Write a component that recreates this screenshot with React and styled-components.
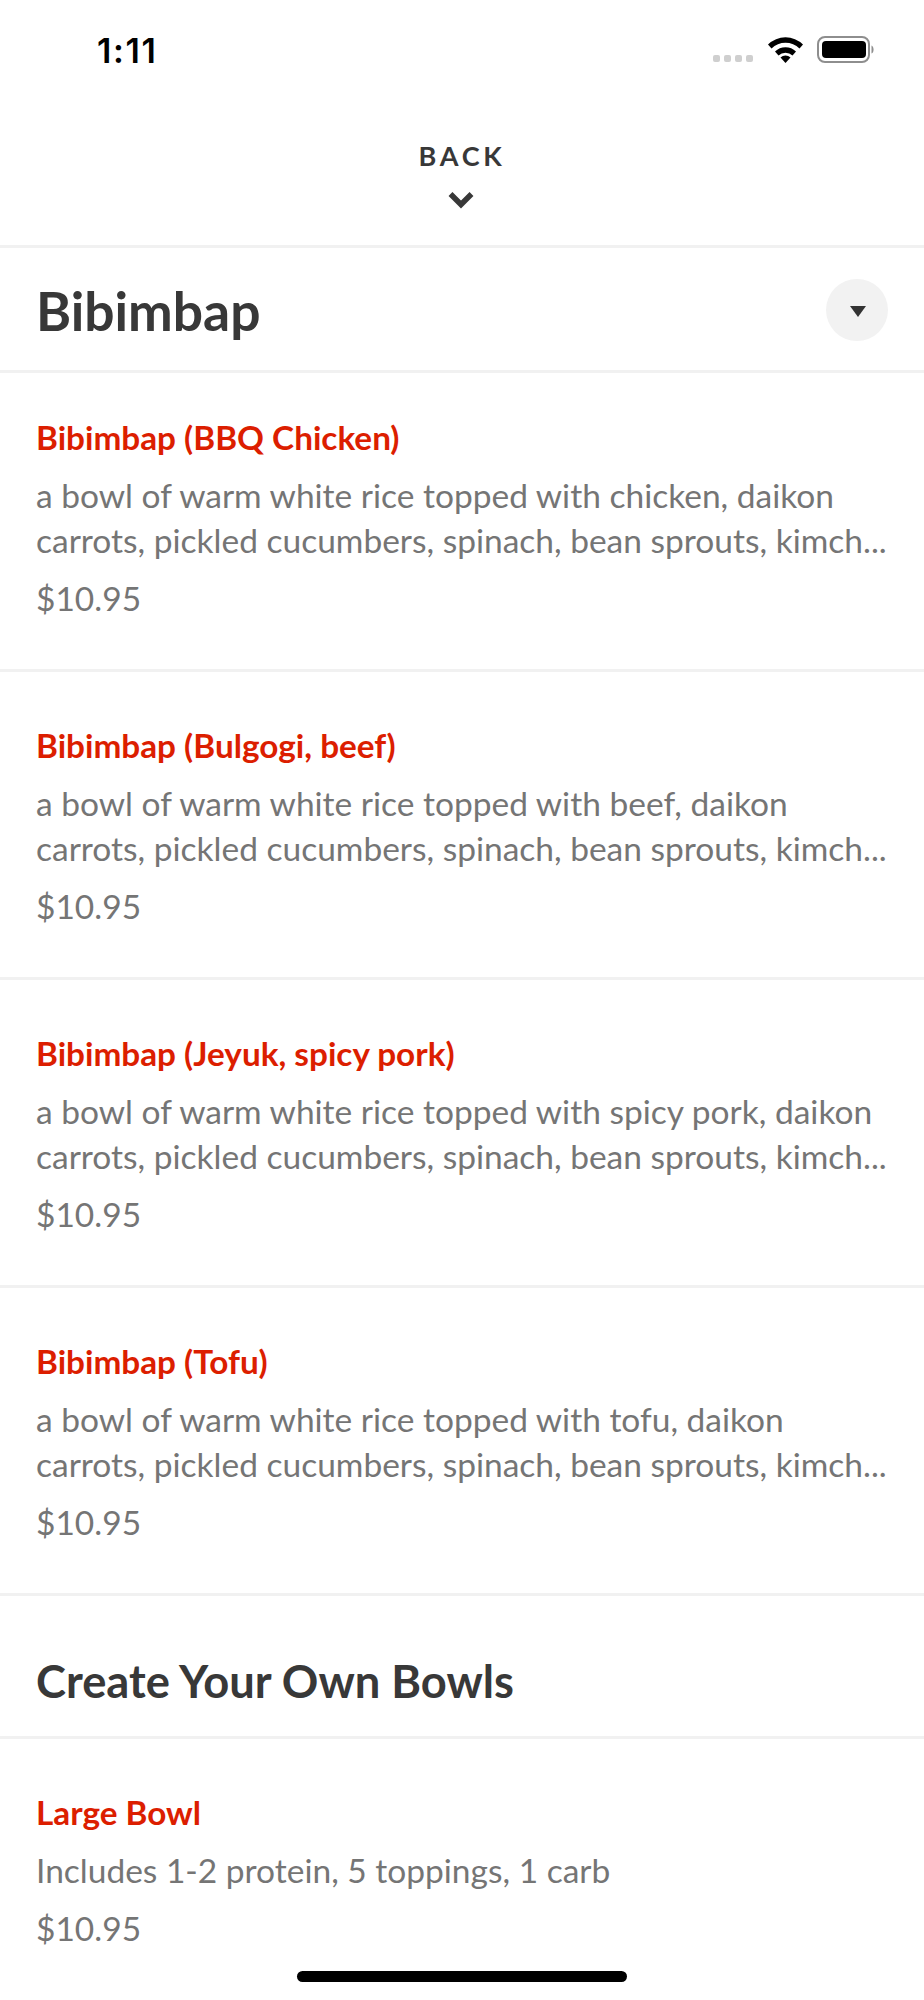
import React from 'react';
import styled, { createGlobalStyle } from 'styled-components';

const GlobalStyle = createGlobalStyle`
  * {
    margin: 0;
    padding: 0;
    box-sizing: border-box;
  }
  body {
    background: #fff;
    font-family: 'Lato', sans-serif;
  }
`;

const Screen = styled.div`
  position: relative;
  width: 924px;
  height: 2000px;
  overflow: hidden;
  background: #fff;
`;

const StatusBar = styled.div`
  display: flex;
  align-items: flex-start;
  justify-content: space-between;
  height: 141px;
  padding: 31px 49px 0 97px;
`;

const Time = styled.div`
  font-family: 'Inter', sans-serif;
  font-size: 34px;
  font-weight: 600;
  line-height: 40px;
  letter-spacing: 1.6px;
  color: #000;
`;

const StatusIcons = styled.div`
  display: flex;
  align-items: flex-end;
  padding-top: 5px;
`;

const SignalDots = styled.div`
  display: flex;
  gap: 3.5px;
  margin-right: 15px;
  margin-bottom: 1px;
`;

const SignalDot = styled.span`
  width: 7.5px;
  height: 7px;
  border-radius: 2px;
  background: #cfcfcf;
`;

const BackBar = styled.div`
  display: flex;
  flex-direction: column;
  align-items: center;
  height: 107px;
  border-bottom: 3px solid #f1f1f1;
`;

const BackLabel = styled.div`
  font-size: 27px;
  font-weight: 700;
  line-height: 30px;
  letter-spacing: 3.8px;
  color: #383838;
`;

const BackChevron = styled.svg`
  display: block;
  margin: 20px 3px 0 0;
`;

const SectionHeader = styled.div`
  display: flex;
  align-items: center;
  justify-content: space-between;
  height: ${(p) => p.$height}px;
  padding: ${(p) => p.$offset}px 36px 0;
  border-bottom: 3px solid #f1f1f1;
`;

const SectionTitle = styled.h1`
  font-size: ${(p) => p.$size}px;
  font-weight: 700;
  color: #383838;
`;

const ToggleButton = styled.div`
  display: flex;
  align-items: center;
  justify-content: center;
  width: 62px;
  height: 62px;
  padding: 3px 0 0 2px;
  border-radius: 50%;
  background: #f2f2f2;
`;

const Item = styled.div`
  height: ${(p) => (p.$first ? 299 : 308)}px;
  padding: ${(p) => (p.$first ? 45 : 54)}px 36px 0;
  border-bottom: 3px solid #f1f1f1;
`;

const ItemName = styled.div`
  font-size: 33.3px;
  font-weight: 700;
  line-height: 38px;
  color: #dc1e00;
`;

const ItemDescription = styled.div`
  margin-top: 17px;
  font-size: 33.5px;
  line-height: 45px;
  color: #757575;
  white-space: nowrap;
`;

const ItemPrice = styled.div`
  margin-top: 16px;
  font-size: 33.5px;
  line-height: 38px;
  color: #757575;
`;

const HomeIndicator = styled.div`
  position: absolute;
  left: 297px;
  top: 1971px;
  width: 330px;
  height: 11px;
  border-radius: 6px;
  background: #000;
`;

const bowls = [
  {
    name: 'Bibimbap (BBQ Chicken)',
    lines: ['a bowl of warm white rice topped with chicken, daikon', 'carrots, pickled cucumbers, spinach, bean sprouts, kimch...'],
  },
  {
    name: 'Bibimbap (Bulgogi, beef)',
    lines: ['a bowl of warm white rice topped with beef, daikon', 'carrots, pickled cucumbers, spinach, bean sprouts, kimch...'],
  },
  {
    name: 'Bibimbap (Jeyuk, spicy pork)',
    lines: ['a bowl of warm white rice topped with spicy pork, daikon', 'carrots, pickled cucumbers, spinach, bean sprouts, kimch...'],
  },
  {
    name: 'Bibimbap (Tofu)',
    lines: ['a bowl of warm white rice topped with tofu, daikon', 'carrots, pickled cucumbers, spinach, bean sprouts, kimch...'],
  },
];

function MenuItem({ name, lines, price, first }) {
  return (
    <Item $first={first}>
      <ItemName>{name}</ItemName>
      <ItemDescription>
        {lines.map((line) => (
          <div key={line}>{line}</div>
        ))}
      </ItemDescription>
      <ItemPrice>{price}</ItemPrice>
    </Item>
  );
}

function App() {
  return (
    <>
      <GlobalStyle />
      <Screen>
        <StatusBar>
          <Time>1:11</Time>
          <StatusIcons>
            <SignalDots>
              <SignalDot />
              <SignalDot />
              <SignalDot />
              <SignalDot />
            </SignalDots>
            <svg width="35" height="27" viewBox="0 0 35 27" style={{ marginRight: 14 }}>
              <path d="M0 8.5 A25 25 0 0 1 35 8.5 L31.5 12.5 A20 20 0 0 0 3.5 12.5 Z" fill="#000" />
              <path d="M7 15.5 A15 15 0 0 1 28 15.5 L24.5 19.5 A10 10 0 0 0 10.5 19.5 Z" fill="#000" />
              <path d="M12.5 21.5 A7.5 7.5 0 0 1 22.5 21.5 L17.5 27 Z" fill="#000" />
            </svg>
            <svg width="58" height="27" viewBox="0 0 58 27">
              <rect x="1" y="1" width="51" height="25" rx="7" fill="none" stroke="#8e8e8e" strokeWidth="2" />
              <rect x="5" y="5" width="44" height="17" rx="4" fill="#000" />
              <path d="M54.5 9.5 C57 10.5 57.5 16.5 54.5 17.5 Z" fill="#8e8e8e" />
            </svg>
          </StatusIcons>
        </StatusBar>

        <BackBar>
          <BackLabel>BACK</BackLabel>
          <BackChevron width="26" height="18" viewBox="0 0 26 18">
            <path d="M2.5 3 L13 13.5 L23.5 3" fill="none" stroke="#383838" strokeWidth="5.5" />
          </BackChevron>
        </BackBar>

        <SectionHeader $height={125} $offset={2}>
          <SectionTitle $size={53.4}>Bibimbap</SectionTitle>
          <ToggleButton>
            <svg width="16" height="11" viewBox="0 0 16 11">
              <path d="M0 0 H16 L8 11 Z" fill="#333" />
            </svg>
          </ToggleButton>
        </SectionHeader>

        {bowls.map((bowl, i) => (
          <MenuItem key={bowl.name} first={i === 0} name={bowl.name} lines={bowl.lines} price="$10.95" />
        ))}

        <SectionHeader $height={143} $offset={28}>
          <SectionTitle $size={45.3}>Create Your Own Bowls</SectionTitle>
        </SectionHeader>

        <MenuItem name="Large Bowl" lines={['Includes 1-2 protein, 5 toppings, 1 carb']} price="$10.95" />

        <HomeIndicator />
      </Screen>
    </>
  );
}

export default App;
